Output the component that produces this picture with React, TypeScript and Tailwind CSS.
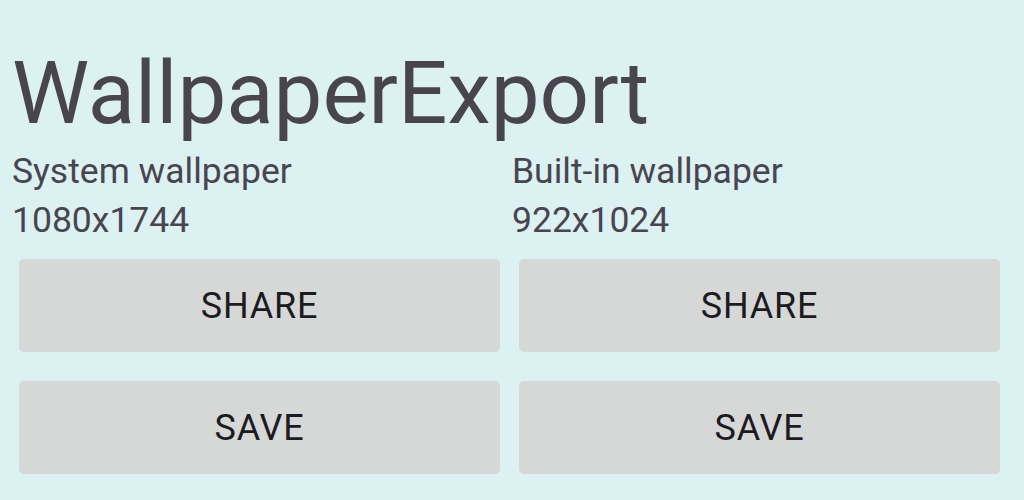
const columns = [
	{ label: "System wallpaper", size: "1080x1744" },
	{ label: "Built-in wallpaper", size: "922x1024" },
];

const ActionButton = ({ text }: { text: string }) => (
	<button className="h-[93px] w-[481px] ml-[7px] rounded-[5px] bg-[#d6d7d7] text-[36px] font-[450] tracking-[0.8px] text-[#1c1b1f]">
		{text}
	</button>
);

const App = () => (
	<div className="w-[1024px] h-[500px] overflow-hidden bg-[#dcf1f2] pt-[45px] pl-[12px] font-['Roboto',sans-serif]">
		<h1 className="text-[87px] leading-[96px] font-normal text-[#49454f]">WallpaperExport</h1>
		<div className="mt-[6px] grid grid-cols-[500px_500px]">
			{columns.map((col) => (
				<div key={col.label} className="flex flex-col">
					<p className="text-[35.5px] leading-[49px] text-[#49454f]">{col.label}</p>
					<p className="text-[35.5px] leading-[49px] text-[#49454f]">{col.size}</p>
					<div className="mt-[14px] flex flex-col gap-[29px]">
						<ActionButton text="SHARE" />
						<ActionButton text="SAVE" />
					</div>
				</div>
			))}
		</div>
	</div>
);

export default App;
